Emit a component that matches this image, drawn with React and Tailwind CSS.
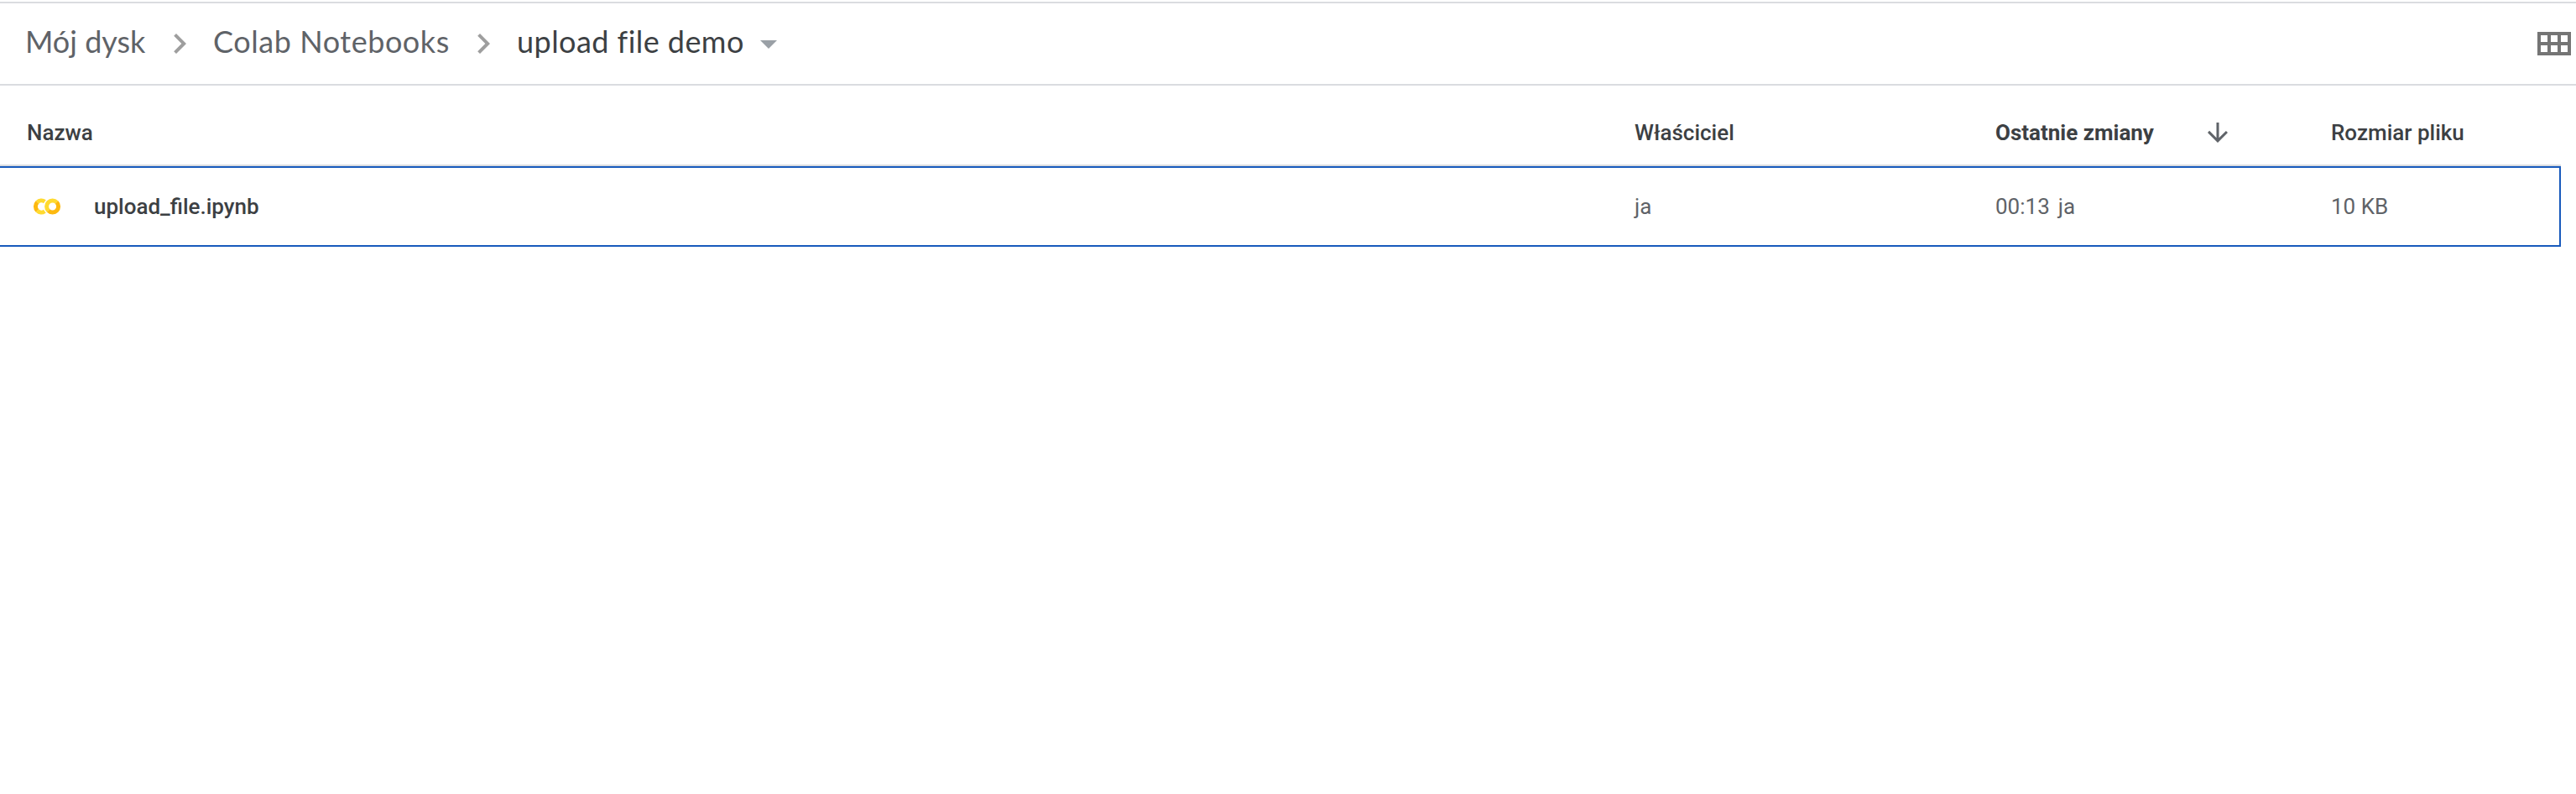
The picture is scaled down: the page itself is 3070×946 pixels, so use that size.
const columns = "grid grid-cols-[1948px_430px_400px_272px]";

function Chevron() {
  return (
    <svg viewBox="0 0 24 24" className="size-12 shrink-0" fill="#9e9e9e">
      <path d="M10 6 8.59 7.41 13.17 12l-4.58 4.59L10 18l6-6z" />
    </svg>
  );
}

function ColabIcon() {
  return (
    <svg viewBox="0 0 34 20" className="h-5 w-[34px] shrink-0" fill="none" strokeWidth="5">
      <path d="M14.4 4.25A7 7 0 0 0 5.45 5.05" stroke="#ffda30" />
      <path d="M5.45 5.05A7 7 0 0 0 5.45 14.95" stroke="#fdb90f" />
      <path d="M5.45 14.95A7 7 0 0 0 14.4 15.75" stroke="#ffda30" />
      <circle cx="23.6" cy="10" r="7" stroke="#fff" strokeWidth="7.2" />
      <path d="M18.65 14.95A7 7 0 0 1 28.55 5.05" stroke="#ffda30" />
      <path d="M28.55 5.05A7 7 0 0 1 18.65 14.95" stroke="#fdb90f" />
    </svg>
  );
}

function Breadcrumbs() {
  return (
    <nav className="flex items-center font-['Lato',sans-serif] text-[36px] leading-[44px] text-[#5f6368]">
      <span className="-mt-1.5 w-[161px] pl-[30px]">Mój dysk</span>
      <span className="ml-[29px]"><Chevron /></span>
      <span className="-mt-1.5 ml-4 w-[298px] tracking-[0.55px]">Colab Notebooks</span>
      <Chevron />
      <span className="-mt-1.5 ml-4 w-[276px] tracking-[0.45px] text-[#3c4043]">upload file demo</span>
      <svg viewBox="0 0 24 24" className="size-12 shrink-0" fill="#9aa0a6">
        <path d="M7 10l5 5 5-5z" />
      </svg>
    </nav>
  );
}

export default function App() {
  return (
    <div className="h-[946px] w-[3070px] overflow-hidden bg-white pt-0.5 font-['Roboto',sans-serif] text-[26px] leading-8 whitespace-nowrap text-[#3c4043]">
      <header className="flex h-[100px] items-center justify-between border-y-2 border-[#dadce0] pr-1.5">
        <Breadcrumbs />
        <svg viewBox="0 0 40 28" className="h-7 w-10" fill="#757575" fillRule="evenodd">
          <path d="M0 0h40v28H0zM4 4v8h8V4zM16 4v8h8V4zM28 4v8h8V4zM4 16v8h8v-8zM16 16v8h8v-8zM28 16v8h8v-8z" />
        </svg>
      </header>
      <main className="w-[3052px]">
        <div className={`${columns} h-24 items-center border-b-2 border-[#dadce0] pt-[18px] font-medium`}>
          <span className="pl-8">Nazwa</span>
          <span>Właściciel</span>
          <span className="flex items-center">
            <span className="w-[247px] font-bold">Ostatnie zmiany</span>
            <svg viewBox="0 0 24 24" className="-my-1 size-9" fill="#5f6368">
              <path d="M20 12l-1.41-1.41L13 16.17V4h-2v12.17l-5.58-5.59L4 12l8 8 8-8z" />
            </svg>
          </span>
          <span>Rozmiar pliku</span>
        </div>
        <div className={`${columns} h-24 items-center border-y-2 border-r-2 border-[#185abc] text-[#5f6368]`}>
          <span className="flex items-center pl-[39px] font-medium text-[#3c4043]">
            <ColabIcon />
            <span className="pl-[39px]">upload_file.ipynb</span>
          </span>
          <span>ja</span>
          <span className="flex gap-2.5">
            <span>00:13</span>
            <span>ja</span>
          </span>
          <span>10 KB</span>
        </div>
      </main>
    </div>
  );
}
